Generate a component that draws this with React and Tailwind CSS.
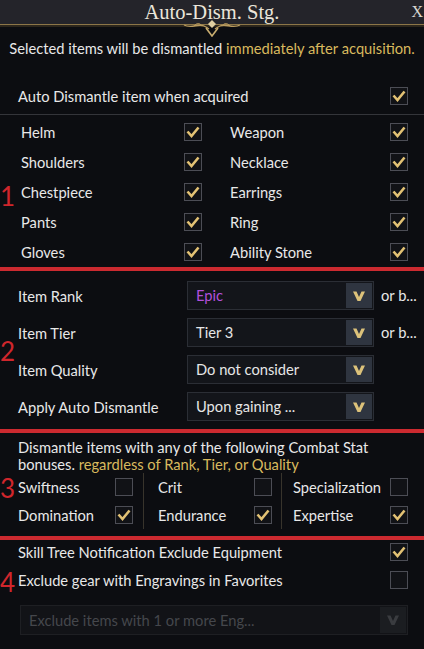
import React from 'react';

const font = { fontFamily: 'Lato, "Noto Sans", sans-serif' };

function Check({ on }) {
  return (
    <div className="w-[18px] h-[18px] shrink-0 border border-[#4c4d55] bg-[#111216] flex items-center justify-center">
      {on && (
        <svg width="14" height="12" viewBox="0 0 14 12">
          <path d="M1.5 5.5 L5.5 10 L12.5 1.5" fill="none" stroke="#e3c274" strokeWidth="2.6" strokeLinejoin="miter" />
        </svg>
      )}
    </div>
  );
}

function Chevron({ color = '#dcc27a' }) {
  return (
    <svg width="14" height="12" viewBox="0 0 14 12">
      <path d="M1 1.5 L4.5 1.5 L7 7 L9.5 1.5 L13 1.5 L8.5 11 L5.5 11 Z" fill={color} />
    </svg>
  );
}

function Dropdown({ value, valueClass = 'text-[#e6e6e6]', disabled }) {
  return (
    <div className={`flex h-full w-full border ${disabled ? 'border-[#1e1f23] bg-[#121317]' : 'border-[#2b2e35] bg-[#13151a]'}`}>
      <div className={`flex-1 flex items-center px-2 whitespace-nowrap overflow-hidden ${disabled ? 'text-[#45474c]' : valueClass}`}>
        {value}
      </div>
      <div className={`w-[26px] shrink-0 flex items-center justify-center m-[1px] ${disabled ? 'bg-[#1b1d21]' : 'bg-[#2f3540]'}`}>
        <Chevron color={disabled ? '#3a3c40' : '#dcc27a'} />
      </div>
    </div>
  );
}

function RedLine() {
  return <div className="h-[4px] bg-[#cc2a30]" />;
}

function Num({ children, top }) {
  return (
    <div className={`absolute left-[0px] ${top} text-[#d0262c] text-[26px] leading-none`} style={font}>
      {children}
    </div>
  );
}

export default function App() {
  const gear = [
    ['Helm', 'Weapon'],
    ['Shoulders', 'Necklace'],
    ['Chestpiece', 'Earrings'],
    ['Pants', 'Ring'],
    ['Gloves', 'Ability Stone'],
  ];

  return (
    <div className="relative w-[424px] h-[649px] overflow-hidden bg-[#0c0d11] text-[#e8e8e8] text-[14.7px]" style={font}>
      {/* title bar */}
      <div className="relative h-[24px] bg-[#24242a] flex items-center justify-center">
        <span className="text-[20.5px] text-[#ebe6da] leading-none" style={{ fontFamily: '"Liberation Serif", "DejaVu Serif", serif' }}>
          Auto-Dism. Stg.
        </span>
        <span className="absolute right-[1px] top-[4px] text-[16px] text-[#d8d6d0] leading-none" style={{ fontFamily: '"Liberation Serif", serif' }}>
          X
        </span>
      </div>
      <div className="h-[1px] bg-[#8c7648]" />
      <div className="h-[2px] bg-[#2c261c]" />
      <svg className="absolute left-[182px] top-[19px]" width="60" height="18" viewBox="0 0 60 18">
        <path d="M2 6 C10 10 16 4 22 7 C24 8 26 9 27 10 M58 6 C50 10 44 4 38 7 C36 8 34 9 33 10" fill="none" stroke="#b89a5e" strokeWidth="1.3" />
        <path d="M12 7 C14 4 18 4 19 6 M48 7 C46 4 42 4 41 6" fill="none" stroke="#b89a5e" strokeWidth="1" />
        <path d="M30 1 L34 5 L30 9 L26 5 Z" fill="#e0cfa2" />
        <path d="M24 9 L30 17 L36 9" fill="none" stroke="#c9ad70" strokeWidth="1.6" />
      </svg>

      {/* subtitle */}
      <div className="h-[51px] pt-[11px] text-center leading-[20px] whitespace-nowrap">
        Selected items will be dismantled <span className="text-[#d9b95e]">immediately after acquisition.</span>
      </div>

      {/* auto dismantle */}
      <div className="h-[37px] flex items-center justify-between pl-[18px] pr-[16px] border-b border-[#34353a]">
        <span>Auto Dismantle item when acquired</span>
        <Check on />
      </div>

      {/* section 1 */}
      <div className="grid grid-cols-2 pt-[2px]">
        {gear.map(([a, b]) => (
          <React.Fragment key={a}>
            <div className="h-[30px] flex items-center justify-between pl-[21px] pr-[10px]">
              <span>{a}</span>
              <Check on />
            </div>
            <div className="h-[30px] flex items-center justify-between pl-[18px] pr-[16px]">
              <span>{b}</span>
              <Check on />
            </div>
          </React.Fragment>
        ))}
      </div>
      <RedLine />

      {/* section 2 */}
      <div className="flex flex-col gap-[8px] pt-[10px] pb-[8px]">
        {[
          ['Item Rank', 'Epic', 'text-[#b24fdc]', true],
          ['Item Tier', 'Tier 3', 'text-[#e6e6e6]', true],
          ['Item Quality', 'Do not consider', 'text-[#e6e6e6]', false],
          ['Apply Auto Dismantle', 'Upon gaining ...', 'text-[#e6e6e6]', false],
        ].map(([label, val, cls, orb]) => (
          <div key={label} className="h-[29px] flex items-center">
            <div className="w-[187px] pl-[18px] pt-[2px] shrink-0 whitespace-nowrap">{label}</div>
            <div className="w-[187px] h-full shrink-0">
              <Dropdown value={val} valueClass={cls} />
            </div>
            {orb && <span className="ml-[7px] whitespace-nowrap">or b...</span>}
          </div>
        ))}
      </div>
      <RedLine />

      {/* section 3 */}
      <div className="pt-[6px] pb-[7px]">
        <div className="pl-[18px] leading-[17px] whitespace-nowrap">
          <div>Dismantle items with any of the following Combat Stat</div>
          <div>
            bonuses. <span className="text-[#d9b95e]">regardless of Rank, Tier, or Quality</span>
          </div>
        </div>
        <div className="grid grid-cols-[143px_138px_1fr]">
          {[
            [['Swiftness', false], ['Domination', true]],
            [['Crit', false], ['Endurance', true]],
            [['Specialization', false], ['Expertise', true]],
          ].map((col, i) => (
            <div
              key={i}
              className={`flex flex-col ${i === 0 ? 'pl-[18px] pr-[10px]' : i === 1 ? 'pl-[14px] pr-[9px] border-l border-[#38342c]' : 'pl-[11px] pr-[16px] border-l border-[#38342c]'}`}
            >
              {col.map(([name, on]) => (
                <div key={name} className="h-[28px] flex items-center gap-[6px]">
                  <span className="flex-1 min-w-0 whitespace-nowrap overflow-hidden">{name}</span>
                  <Check on={on} />
                </div>
              ))}
            </div>
          ))}
        </div>
      </div>
      <RedLine />

      {/* section 4 */}
      <div>
        <div className="h-[24px] flex items-center justify-between pl-[18px] pr-[16px]">
          <span>Skill Tree Notification Exclude Equipment</span>
          <Check on />
        </div>
        <div className="h-[28px] mt-[2px] flex items-center justify-between pl-[18px] pr-[16px]">
          <span>Exclude gear with Engravings in Favorites</span>
          <Check />
        </div>
        <div className="h-[30px] mt-[11px] ml-[20px] mr-[16px]">
          <Dropdown value="Exclude items with 1 or more Eng..." disabled />
        </div>
      </div>

      <Num top="top-[183px]">1</Num>
      <Num top="top-[338px]">2</Num>
      <Num top="top-[475px]">3</Num>
      <Num top="top-[569px]">4</Num>
    </div>
  );
}
